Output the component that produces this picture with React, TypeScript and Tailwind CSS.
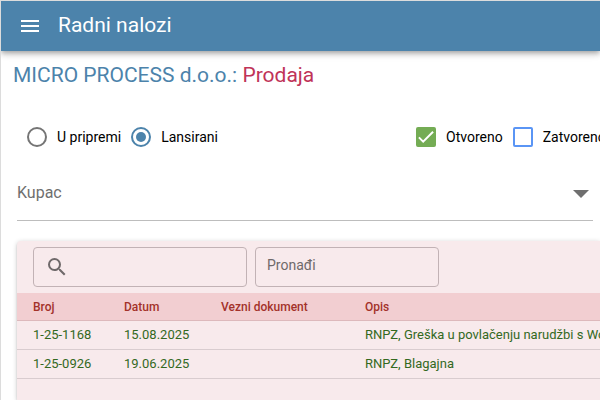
import { useState } from "react";
import type { ReactNode } from "react";

type Order = { broj: string; datum: string; vezni: string; opis: string };

const orders: Order[] = [
  { broj: "1-25-1168", datum: "15.08.2025", vezni: "", opis: "RNPZ, Greška u povlačenju narudžbi s WooCommerce" },
  { broj: "1-25-0926", datum: "19.06.2025", vezni: "", opis: "RNPZ, Blagajna" },
];

function Radio({ label, checked, onSelect }: { label: string; checked: boolean; onSelect: () => void }) {
  return (
    <label className="flex items-center gap-2.5">
      <span className="grid size-5 place-items-center">
        <input
          type="radio"
          name="status"
          checked={checked}
          onChange={onSelect}
          className="peer col-start-1 row-start-1 size-5 appearance-none rounded-full border-2 border-[#757575] checked:border-[#4c83ab]"
        />
        <span className="col-start-1 row-start-1 hidden size-2.5 rounded-full bg-[#4c83ab] peer-checked:block" />
      </span>
      {label}
    </label>
  );
}

function Check({ label, initial }: { label: string; initial: boolean }) {
  const [on, setOn] = useState(initial);
  return (
    <label className="flex items-center gap-2.5">
      <span className="grid size-5 place-items-center">
        <input
          type="checkbox"
          checked={on}
          onChange={() => setOn(!on)}
          className="peer col-start-1 row-start-1 size-5 appearance-none rounded-xs border-2 border-[#5a95f5] checked:border-[#74ac54] checked:bg-[#74ac54]"
        />
        <svg viewBox="0 0 24 24" className="pointer-events-none col-start-1 row-start-1 hidden size-5 peer-checked:block" fill="none" stroke="white" strokeWidth="2.4">
          <path d="M3.5 12.5 8.6 17.6 20.5 5.7" />
        </svg>
      </span>
      {label}
    </label>
  );
}

function Th({ children, className = "" }: { children: ReactNode; className?: string }) {
  return <th className={`h-7 border-b border-[#ddb9bc] text-left font-medium ${className}`}>{children}</th>;
}

export default function App() {
  const [status, setStatus] = useState("Lansirani");
  return (
    <div className="flex h-screen flex-col overflow-hidden border-t border-l border-[#dcdcdc] bg-white font-['Roboto','Noto_Sans',sans-serif] text-black">
      <header className="z-10 flex h-[50px] shrink-0 items-center gap-4 bg-[#4c83ab] px-[17px] text-white shadow-[0_2px_4px_-1px_rgba(0,0,0,0.2),0_4px_5px_rgba(0,0,0,0.14),0_1px_10px_rgba(0,0,0,0.12)]">
        <button type="button" aria-label="Izbornik">
          <svg viewBox="0 0 24 24" className="size-6" fill="currentColor">
            <path d="M3 18h18v-2H3v2zm0-5h18v-2H3v2zm0-7v2h18V6H3z" />
          </svg>
        </button>
        <h1 className="pb-0.5 text-[21px] leading-8">Radni nalozi</h1>
      </header>

      <main className="flex grow flex-col whitespace-nowrap">
        <h2 className="mt-2 px-3 text-[21px] leading-8 text-[#4c83ab]">
          MICRO PROCESS d.o.o.: <span className="text-[#c03358]">Prodaja</span>
        </h2>

        <div className="mt-9 flex pl-[26px] text-sm">
          <div className="flex w-[389px] shrink-0 gap-2.5">
            {["U pripremi", "Lansirani"].map((name) => (
              <Radio key={name} label={name} checked={status === name} onSelect={() => setStatus(name)} />
            ))}
          </div>
          <div className="flex gap-2.5">
            <Check label="Otvoreno" initial={true} />
            <Check label="Zatvoreno" initial={false} />
          </div>
        </div>

        <div className="mt-[17px] mr-[7px] ml-4 grid h-[57px] items-center border-b border-[#bdbdbd] text-[#6f6f6f]">
          <select aria-label="Kupac" className="col-start-1 row-start-1 h-full w-full appearance-none bg-transparent pt-0.5 text-base">
            <option>Kupac</option>
          </select>
          <svg viewBox="0 0 24 24" className="pointer-events-none col-start-1 row-start-1 size-6 justify-self-end" fill="currentColor">
            <path d="M4 10l8 8 8-8z" />
          </svg>
        </div>

        <section className="mt-5 ml-4 grow rounded-tl bg-[#f8eaec] shadow-[0_1px_5px_rgba(0,0,0,0.2),0_2px_2px_rgba(0,0,0,0.14)]">
          <div className="flex gap-2 px-4 pt-1.5 pb-1.5">
            <label className="flex h-10 w-[214px] items-center gap-2 rounded border border-[#c2b2b5] px-[11px]">
              <svg viewBox="0 0 24 24" className="size-6 shrink-0 text-[#6f696a]" fill="currentColor">
                <path d="M15.5 14h-.79l-.28-.27A6.47 6.47 0 0 0 16 9.5 6.5 6.5 0 1 0 9.5 16c1.61 0 3.09-.59 4.23-1.57l.27.28v.79l5 4.99L20.49 19l-4.99-5zm-6 0C7.01 14 5 11.99 5 9.5S7.01 5 9.5 5 14 7.01 14 9.5 11.99 14 9.5 14z" />
              </svg>
              <input type="text" aria-label="Traži" className="w-full min-w-0 bg-transparent text-sm outline-none" />
            </label>
            <input
              type="text"
              aria-label="Pronađi"
              placeholder="Pronađi"
              className="h-10 w-[184px] rounded border border-[#c2b2b5] bg-transparent px-[11px] pb-1 text-sm outline-none placeholder:text-[#6f696a]"
            />
          </div>

          <table className="w-full table-fixed border-separate border-spacing-0">
            <thead className="bg-[#f2ced1] text-xs text-[#a3322a]">
              <tr>
                <Th className="w-[107px] pl-4">Broj</Th>
                <Th className="w-[97px]">Datum</Th>
                <Th className="w-[144px]">Vezni dokument</Th>
                <Th>Opis</Th>
              </tr>
            </thead>
            <tbody className="text-[13px] text-[#33691e]">
              {orders.map((o) => (
                <tr key={o.broj}>
                  <td className="h-[29px] border-b border-[#d9cccf] pl-4">{o.broj}</td>
                  <td className="border-b border-[#d9cccf]">{o.datum}</td>
                  <td className="border-b border-[#d9cccf]">{o.vezni}</td>
                  <td className="border-b border-[#d9cccf]">{o.opis}</td>
                </tr>
              ))}
            </tbody>
          </table>
        </section>
      </main>
    </div>
  );
}
